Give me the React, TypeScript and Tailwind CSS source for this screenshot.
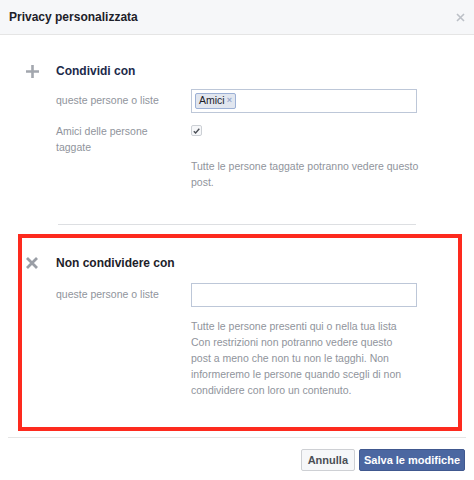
const font = { fontFamily: '"Liberation Sans", Arial, sans-serif' }

const PlusIcon = () => (
  <svg width="13" height="13" viewBox="0 0 13 13" className="block">
    <path d="M6.5 0v13M0 6.5h13" stroke="#a3a7ae" strokeWidth="2.6" />
  </svg>
)

const CrossIcon = () => (
  <svg width="12" height="12" viewBox="0 0 12 12" className="block">
    <path d="M1 1l10 10M11 1L1 11" stroke="#9a9ea6" strokeWidth="2.8" />
  </svg>
)

const Field = ({ children }: { children?: React.ReactNode }) => (
  <div className="box-border flex h-[24px] w-[226px] items-center border border-[#bdc7d8] bg-white px-[3px]">
    {children}
  </div>
)

export default function App() {
  return (
    <div className="h-[480px] w-[474px] bg-white text-[#1d2129]" style={font}>
      <div className="box-border flex h-[35px] items-center justify-between border-b border-[#e5e5e5] bg-[#f6f7f9] pl-[9px] pr-[9px]">
        <span className="text-[12px] font-bold text-[#1d2129]">Privacy personalizzata</span>
        <svg width="9" height="9" viewBox="0 0 9 9" className="block">
          <path d="M1 1l7 7M8 1L1 8" stroke="#bcc0c7" strokeWidth="1.6" />
        </svg>
      </div>

      <div className="pl-[26px] pt-[28px]">
        <div className="flex h-4 items-center">
          <div className="w-[30px]">
            <PlusIcon />
          </div>
          <h2 className="text-[12px] font-bold text-[#1c2a4a]">Condividi con</h2>
        </div>

        <div className="ml-[30px] mt-[10px] flex items-center">
          <div className="w-[135px] text-[10.5px] text-[#90949c]">queste persone o liste</div>
          <Field>
            <span className="box-border flex h-[16px] items-center gap-[2px] rounded-[2px] border border-[#9cb0d5] bg-[#e1e6ef] px-[3px] text-[10.5px] text-[#1d2129]">
              Amici
              <span className="text-[9px] font-bold text-[#98a8cc]">×</span>
            </span>
          </Field>
        </div>

        <div className="ml-[30px] mt-[10px] flex">
          <div className="w-[135px] text-[10.5px] leading-4 text-[#90949c]">
            Amici delle persone
            <br />
            taggate
          </div>
          <div className="mt-[2px] box-border flex h-[11px] w-[11px] items-center justify-center rounded-[2px] border border-[#ccd0d5] bg-[#f6f7f9]">
            <svg width="7" height="6" viewBox="0 0 7 6" className="block">
              <path d="M0.8 3.2l1.8 1.8L6.3 0.8" stroke="#4b4f56" strokeWidth="1.4" fill="none" />
            </svg>
          </div>
        </div>

        <p className="ml-[165px] mt-[3px] whitespace-nowrap text-[10.5px] leading-4 text-[#90949c]">
          Tutte le persone taggate potranno vedere questo
          <br />
          post.
        </p>
      </div>

      <div className="ml-[58px] mt-[34px] h-px w-[358px] bg-[#dddfe2]" />

      <div className="ml-[18px] mr-[12px] mt-[9px] border-4 border-[#fd2a1e] pb-[29px] pl-[4px] pt-[17px]">
        <div className="flex h-4 items-center">
          <div className="w-[30px]">
            <CrossIcon />
          </div>
          <h2 className="text-[12px] font-bold text-[#1d2129]">Non condividere con</h2>
        </div>

        <div className="ml-[30px] mt-[12px] flex items-center">
          <div className="w-[135px] text-[10.5px] text-[#90949c]">queste persone o liste</div>
          <Field />
        </div>

        <p className="ml-[165px] mt-[11px] whitespace-nowrap text-[10.5px] leading-4 text-[#90949c]">
          Tutte le persone presenti qui o nella tua lista
          <br />
          Con restrizioni non potranno vedere questo
          <br />
          post a meno che non tu non le tagghi. Non
          <br />
          informeremo le persone quando scegli di non
          <br />
          condividere con loro un contenuto.
        </p>
      </div>

      <div className="mx-[8px] mt-[6px] flex justify-end gap-[4px] border-t border-[#e5e5e5] pr-[1px] pt-[11px]">
        <button className="box-border h-[22px] rounded-[2px] border border-[#ced0d4] bg-[#f6f7f9] px-[6px] text-[11px] font-bold text-[#4b4f56]">
          Annulla
        </button>
        <button className="box-border h-[22px] rounded-[2px] border border-[#40588f] bg-[#4b67a1] px-[4px] text-[11px] font-bold text-white">
          Salva le modifiche
        </button>
      </div>
    </div>
  )
}
